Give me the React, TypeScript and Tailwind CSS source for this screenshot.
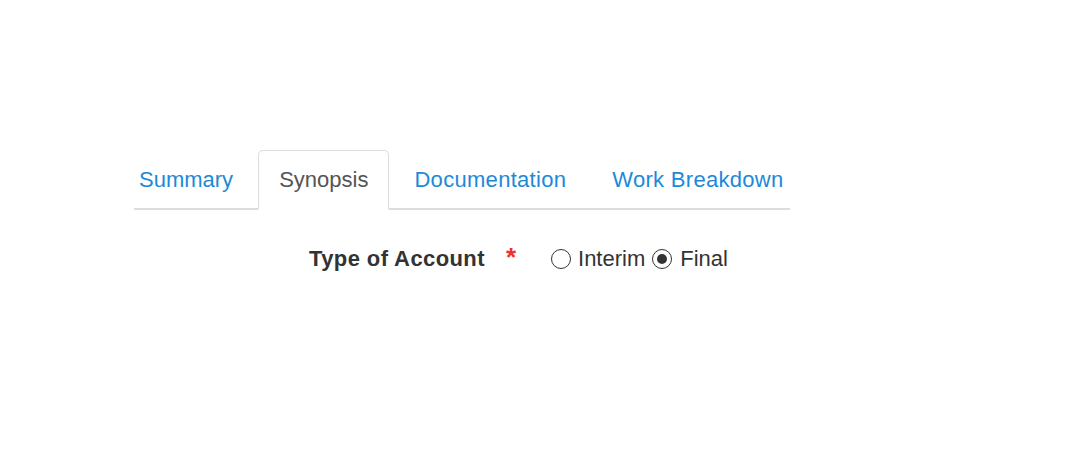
const tabs = ['Summary', 'Synopsis', 'Documentation', 'Work Breakdown'];

export default function App() {
  const active = 'Synopsis';
  return (
    <div
      className="w-[1080px] h-[470px] bg-white overflow-hidden"
      style={{ fontFamily: '"Liberation Sans", Arial, sans-serif' }}
    >
      {/* Tabs */}
      <div className="ml-[134px] mt-[150px] w-[656px] flex border-b-2 border-[#dddddd] text-[22px] leading-[24px]">
        {tabs.map((t, i) => (
          <div
            key={t}
            className={`-mb-[2px] mr-[4px] h-[60px] shrink-0 whitespace-nowrap flex items-center rounded-t-[5px] border ${
              i === 0 ? 'pl-[4px] pr-[20px]' : 'px-[20px]'
            } ${i > 1 ? 'tracking-[0.3px]' : ''} ${
              t === active
                ? 'border-[#dddddd] border-b-2 border-b-white bg-white text-[#555555]'
                : 'border-transparent text-[#1d8ad8]'
            }`}
          >
            {t}
          </div>
        ))}
      </div>

      {/* Form row */}
      <div className="ml-[309px] mt-[37px] flex items-center text-[22px] leading-[24px] text-[#333333]">
        <span className="font-bold tracking-[0.4px]">Type of Account</span>
        <span className="ml-[21px] text-[26px] leading-[24px] text-[#ee3030] font-bold -mt-[4px]">*</span>
        <label className="ml-[35px] flex items-center">
          <span className="w-[20px] h-[20px] rounded-full border-[1.5px] border-[#333333] bg-white" />
          <span className="ml-[7px]">Interim</span>
        </label>
        <label className="ml-[7px] flex items-center">
          <span className="w-[20px] h-[20px] rounded-full border-[1.5px] border-[#333333] bg-white flex items-center justify-center">
            <span className="w-[10px] h-[10px] rounded-full bg-[#333333]" />
          </span>
          <span className="ml-[8px]">Final</span>
        </label>
      </div>
    </div>
  );
}
